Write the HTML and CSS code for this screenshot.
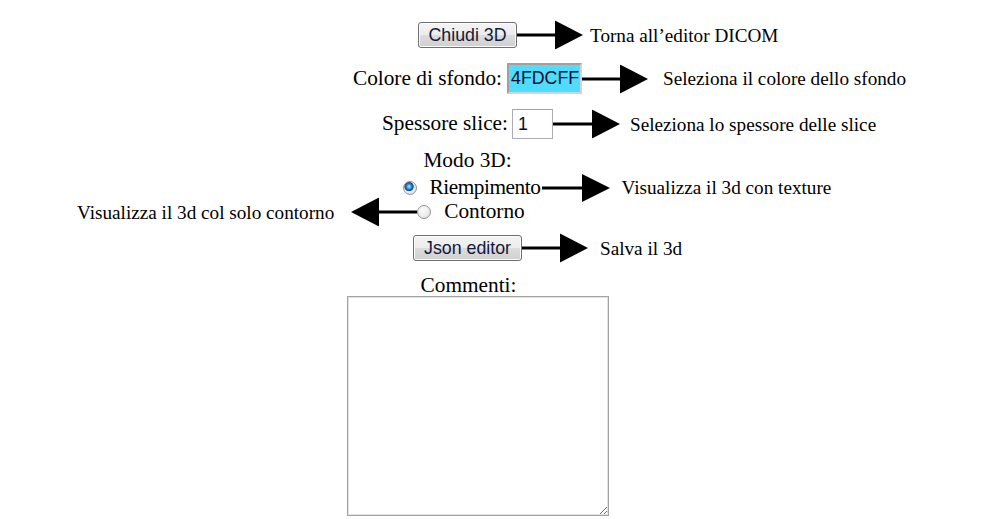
FILE: index.html
```html
<!DOCTYPE html>
<html lang="it">
<head>
<meta charset="utf-8">
<title>Visualizzatore 3D</title>
<link rel="stylesheet" href="styles.css">
</head>
<body>
<div class="page">
  <div class="row r1">
    <div class="core">
      <button class="btn">Chiudi 3D</button>
      <div class="anno gap7">
        <svg class="arrow" width="66" height="29" viewBox="0 0 66 29"><line x1="0" y1="14.5" x2="40" y2="14.5" stroke="#000" stroke-width="3"/><polygon points="38,0 66,14.5 38,29" fill="#000"/></svg>
        <span class="note">Torna all’editor DICOM</span>
      </div>
    </div>
  </div>

  <div class="row r2">
    <div class="core">
      <label class="lbl" for="bg">Colore di sfondo:</label>
      <input id="bg" class="color-in" type="text" value="4FDCFF">
      <div class="anno gap15">
        <svg class="arrow" width="66" height="29" viewBox="0 0 66 29"><line x1="0" y1="14.5" x2="40" y2="14.5" stroke="#000" stroke-width="3"/><polygon points="38,0 66,14.5 38,29" fill="#000"/></svg>
        <span class="note">Seleziona il colore dello sfondo</span>
      </div>
    </div>
  </div>

  <div class="row r3">
    <div class="core">
      <label class="lbl" for="sp">Spessore slice:</label>
      <input id="sp" class="num-in" type="text" value="1">
      <div class="anno gap10">
        <svg class="arrow" width="67" height="29" viewBox="0 0 67 29"><line x1="0" y1="14.5" x2="41" y2="14.5" stroke="#000" stroke-width="3"/><polygon points="39,0 67,14.5 39,29" fill="#000"/></svg>
        <span class="note">Seleziona lo spessore delle slice</span>
      </div>
    </div>
  </div>

  <div class="row r4">
    <div class="core"><span class="lbl">Modo 3D:</span></div>
  </div>

  <div class="row r5">
    <div class="core">
      <input class="radio" type="radio" name="mode" id="m1" checked>
      <label class="lbl tight" for="m1">Riempimento</label>
      <div class="anno gap12 nudge">
        <svg class="arrow" width="68" height="28" viewBox="0 0 68 28"><line x1="0" y1="14" x2="42" y2="14" stroke="#000" stroke-width="3"/><polygon points="40,0 68,14 40,28" fill="#000"/></svg>
        <span class="note">Visualizza il 3d con texture</span>
      </div>
    </div>
  </div>

  <div class="row r6">
    <div class="core">
      <div class="anno-left">
        <span class="note">Visualizza il 3d col solo contorno</span>
        <svg class="arrow" width="66" height="29" viewBox="0 0 66 29"><polygon points="28,0 0,14.5 28,29" fill="#000"/><line x1="26" y1="14.5" x2="66" y2="14.5" stroke="#000" stroke-width="3"/></svg>
      </div>
      <input class="radio" type="radio" name="mode" id="m2">
      <label class="lbl" for="m2">Contorno</label>
    </div>
  </div>

  <div class="row r7">
    <div class="core">
      <button class="btn btn-json">Json editor</button>
      <div class="anno gap12">
        <svg class="arrow" width="66" height="29" viewBox="0 0 66 29"><line x1="0" y1="14.5" x2="40" y2="14.5" stroke="#000" stroke-width="3"/><polygon points="38,0 66,14.5 38,29" fill="#000"/></svg>
        <span class="note">Salva il 3d</span>
      </div>
    </div>
  </div>

  <div class="row r8">
    <div class="core"><span class="lbl">Commenti:</span></div>
  </div>

  <div class="row r9">
    <textarea class="comments"></textarea>
  </div>
</div>
</body>
</html>
```

FILE: styles.css
```css
html, body {
  margin: 0;
  padding: 0;
  background: #fff;
}

body {
  font-family: "Liberation Serif", "Times New Roman", serif;
  color: #000;
  overflow: hidden;
}

.page {
  width: 935px;
  padding-top: 20px;
  display: flex;
  flex-direction: column;
}

.row {
  display: flex;
  justify-content: center;
  align-items: center;
}

.core {
  position: relative;
  display: flex;
  align-items: center;
  height: 100%;
}

.r1 { height: 30px; }
.r2 { height: 31px; margin-top: 13px; }
.r3 { height: 30px; margin-top: 15px; }
.r4 { height: 20px; margin-top: 12px; }
.r5 { height: 23px; margin-top: 5px; margin-left: 8px; }
.r6 { height: 22px; margin-top: 2px; margin-left: 7px; }
.r7 { height: 24px; margin-top: 13px; }
.r8 { height: 18px; margin-top: 17px; margin-left: 2px; }
.r9 { margin-top: 1px; margin-left: 20px; }

.lbl {
  font-size: 21.3px;
  line-height: 1;
  white-space: nowrap;
}

.lbl.tight {
  letter-spacing: -0.45px;
}

.note {
  font-size: 19.2px;
  line-height: 1;
  white-space: nowrap;
}

.anno {
  position: absolute;
  left: 100%;
  top: 50%;
  transform: translateY(-50%);
  display: flex;
  align-items: center;
}

.anno.nudge { margin-left: 1px; }

.anno-left {
  position: absolute;
  right: 100%;
  top: 50%;
  transform: translateY(-50%);
  display: flex;
  align-items: center;
  gap: 17px;
}

.gap7 { gap: 7px; }
.gap10 { gap: 10px; }
.gap12 { gap: 12px; }
.gap15 { gap: 15px; }

.arrow { display: block; flex: none; }

.btn {
  box-sizing: border-box;
  height: 26px;
  width: 99px;
  padding: 0;
  font-family: "Liberation Sans", Arial, sans-serif;
  font-size: 17.8px;
  color: #14193a;
  border: 1px solid #707070;
  border-radius: 3px;
  background: linear-gradient(#f4f4f4 0%, #ececec 48%, #dcdcdc 52%, #d0d0d0 100%);
  box-shadow: inset 0 0 0 1px #fbfbfb;
}

.btn-json { width: 109px; }

.color-in {
  box-sizing: border-box;
  width: 75px;
  height: 31px;
  margin: 0 0 0 5px;
  padding: 0 0 0 2px;
  font-family: "Liberation Sans", Arial, sans-serif;
  font-size: 17.8px;
  color: #0a0a2a;
  background: #4fdcff;
  border-style: solid;
  border-width: 2px;
  border-color: #a0a0a0 #d4d4d4 #d4d4d4 #a0a0a0;
}

.num-in {
  box-sizing: border-box;
  width: 41px;
  height: 30px;
  margin: 0 0 0 4px;
  padding: 0 0 0 5px;
  font-family: "Liberation Sans", Arial, sans-serif;
  font-size: 17.8px;
  color: #0a0a2a;
  background: #fff;
  border: 1px solid #abadb3;
  border-top-color: #9fa2a8;
}

.radio {
  appearance: none;
  -webkit-appearance: none;
  box-sizing: border-box;
  width: 14px;
  height: 14px;
  margin: 0 13px 0 0;
  border-radius: 50%;
  border: 1px solid #959595;
  background: radial-gradient(circle at 40% 35%, #fdfdfd 0%, #ececec 55%, #d2d2d2 100%);
  flex: none;
}

.radio:checked {
  background:
    radial-gradient(circle at 42% 38%, #c9ecff 0px, #58b4ee 1.5px, #1b74c4 3px, #0d4f96 4.2px, #6e8aa8 4.6px, transparent 5px),
    radial-gradient(circle at 40% 35%, #fdfdfd 0%, #ececec 55%, #d2d2d2 100%);
}

.comments {
  box-sizing: border-box;
  width: 262px;
  height: 220px;
  margin: 0;
  border: 1px solid #a3a3a3;
  box-shadow: inset 0 0 0 1px #e2e2e2;
  background: #fff;
  resize: both;
}
```
